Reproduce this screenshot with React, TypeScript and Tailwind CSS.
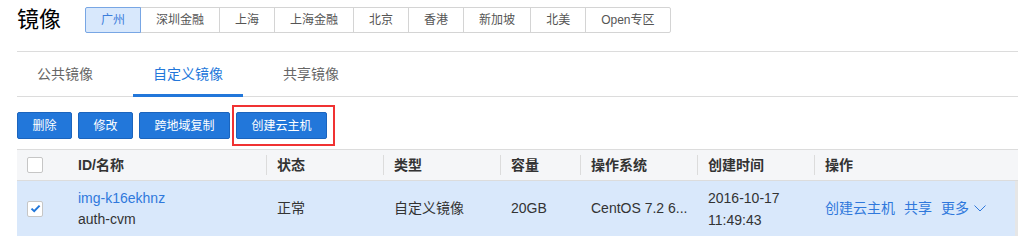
import clsx from 'clsx';

const REGIONS = ['广州', '深圳金融', '上海', '上海金融', '北京', '香港', '新加坡', '北美', 'Open专区'];
const TABS = ['公共镜像', '自定义镜像', '共享镜像'];
const ACTIONS = ['删除', '修改', '跨地域复制', '创建云主机'];
const COLUMNS = ['状态', '类型', '容量', '操作系统', '创建时间', '操作'];

const GRID = 'grid grid-cols-[50px_199px_117px_117px_80px_117px_117px_1fr]';

function Checkbox({ checked }: { checked?: boolean }) {
    return (
        <div className="w-4 h-4 rounded-[2px] border border-[#c6c6c6] bg-white flex items-center justify-center">
            {checked && (
                <svg width="11" height="9" viewBox="0 0 11 9" fill="none">
                    <path d="M1.5 4.6 L4.2 7.2 L9.6 1.6" stroke="#2277da" strokeWidth="2" />
                </svg>
            )}
        </div>
    );
}

export default function App() {
    return (
        <div className="bg-white w-[1018px] h-[243px] overflow-hidden pl-[17px] text-[#333] font-['Liberation_Sans','Noto_Sans_CJK_SC',sans-serif]">
            {/* Title + regions */}
            <div className="flex items-center pt-[7px] mb-[18px]">
                <h1 className="text-[22px] leading-[26px] text-black mr-[24px]">镜像</h1>
                <div className="flex">
                    {REGIONS.map((r, i) => (
                        <div
                            key={r}
                            className={clsx(
                                'h-[26px] px-[15px] flex items-center text-[12px] leading-none border',
                                i > 0 && '-ml-px',
                                i === 0
                                    ? 'bg-[#d8e8fc] border-[#78a6e4] text-[#3b7ddb] relative z-10 rounded-l-[2px]'
                                    : 'border-[#d4d4d4] text-[#555]',
                                i === REGIONS.length - 1 && 'rounded-r-[2px]'
                            )}
                        >
                            {r}
                        </div>
                    ))}
                </div>
            </div>

            {/* Sub tabs */}
            <div className="flex border-t border-b border-[#dcdcdc] h-[46px]">
                {TABS.map((t, i) => (
                    <div
                        key={t}
                        className={clsx(
                            'px-5 mr-5 flex items-center text-[14px]',
                            i === 1
                                ? 'h-[45px] border-b-[3px] border-[#2277da] text-[#2277da] -mb-px pt-[3px]'
                                : 'h-[44px] text-[#666]'
                        )}
                    >
                        {t}
                    </div>
                ))}
            </div>

            {/* Buttons */}
            <div className="flex gap-[6px] mt-[15px]">
                {ACTIONS.map((a, i) => (
                    <div key={a} className="relative">
                        <button className="h-[27px] px-[14.5px] rounded-[2px] bg-[#2277da] border border-[#1b64bd] text-white text-[12px] leading-none">
                            {a}
                        </button>
                        {i === ACTIONS.length - 1 && (
                            <div className="absolute -left-[4px] -right-[8px] -top-[7px] -bottom-[7px] border-2 border-[#f03232]" />
                        )}
                    </div>
                ))}
            </div>

            {/* Table */}
            <div className="mt-[10px] border-t border-[#dcdcdc]">
                <div className={clsx(GRID, 'h-[31px] bg-[#f5f6f8] border-b border-[#dcdcdc] text-[14px] font-bold text-[#333]')}>
                    <div className="pl-[10px] flex items-center">
                        <Checkbox />
                    </div>
                    <div className="pl-[11px] flex items-center">ID/名称</div>
                    {COLUMNS.map(c => (
                        <div key={c} className="flex items-center">
                            <div className="h-[20px] border-l border-[#dcdcdc] pl-[10px] flex items-center">{c}</div>
                        </div>
                    ))}
                </div>

                <div className="flex">
                    <div className={clsx(GRID, 'flex-1 h-[55px] bg-[#d9e8fb] text-[14px] leading-[21px] text-[#333]')}>
                        <div className="pl-[10px] flex items-center">
                            <Checkbox checked />
                        </div>
                        <div className="pl-[11px] flex flex-col justify-center">
                            <span className="text-[#2f78dc]">img-k16ekhnz</span>
                            <span>auth-cvm</span>
                        </div>
                        <div className="pl-[11px] flex items-center">正常</div>
                        <div className="pl-[11px] flex items-center">自定义镜像</div>
                        <div className="pl-[11px] flex items-center">20GB</div>
                        <div className="pl-[11px] flex items-center">CentOS 7.2 6...</div>
                        <div className="pl-[11px] flex flex-col justify-center leading-[22px]">
                            <span>2016-10-17</span>
                            <span>11:49:43</span>
                        </div>
                        <div className="pl-[11px] flex items-center gap-[9px] text-[#2f78dc]">
                            <span>创建云主机</span>
                            <span>共享</span>
                            <span className="flex items-center gap-[5px]">
                                更多
                                <svg width="12" height="7" viewBox="0 0 12 7" fill="none">
                                    <path d="M0.5 0.5 L6 6 L11.5 0.5" stroke="#2f78dc" strokeWidth="1" />
                                </svg>
                            </span>
                        </div>
                    </div>
                    <div className="w-[3px] bg-[#e6e6e6]" />
                </div>
            </div>
        </div>
    );
}
